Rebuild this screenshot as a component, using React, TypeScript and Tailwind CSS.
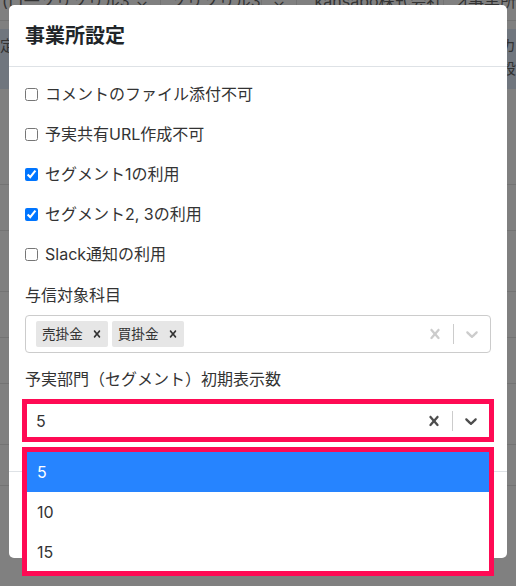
import React from "react";

const CrossIcon = ({ size = 20, className = "" }: { size?: number; className?: string }) => (
  <svg width={size} height={size} viewBox="0 0 20 20" className={className} fill="currentColor">
    <path d="M14.348 14.849c-0.469 0.469-1.229 0.469-1.697 0l-2.651-3.030-2.651 3.029c-0.469 0.469-1.229 0.469-1.697 0-0.469-0.469-0.469-1.229 0-1.697l2.758-3.15-2.759-3.152c-0.469-0.469-0.469-1.228 0-1.697s1.228-0.469 1.697 0l2.652 3.031 2.651-3.031c0.469-0.469 1.228-0.469 1.697 0s0.469 1.229 0 1.697l-2.758 3.152 2.758 3.15c0.469 0.469 0.469 1.229 0 1.698z" />
  </svg>
);

const ChevronIcon = ({ className = "" }: { className?: string }) => (
  <svg width={20} height={20} viewBox="0 0 20 20" className={className} fill="currentColor">
    <path d="M4.516 7.548c0.436-0.446 1.043-0.481 1.576 0l3.908 3.747 3.908-3.747c0.533-0.481 1.141-0.446 1.574 0 0.436 0.445 0.408 1.197 0 1.615-0.406 0.418-4.695 4.502-4.695 4.502-0.217 0.223-0.502 0.335-0.787 0.335s-0.57-0.112-0.789-0.335c0 0-4.287-4.084-4.695-4.502s-0.436-1.17 0-1.615z" />
  </svg>
);

const Check = ({ label, checked }: { label: string; checked?: boolean }) => (
  <label className="flex h-[40px] items-center gap-[7px]">
    <input type="checkbox" defaultChecked={checked} className="m-0 h-[13px] w-[13px] accent-[#0075ff]" />
    <span className="text-[16px] text-[#333]">{label}</span>
  </label>
);

const Tag = ({ label }: { label: string }) => (
  <div className="flex h-[26px] items-center rounded-[2px] bg-[#e6e6e6]">
    <span className="pl-[6px] pr-[3px] text-[13.6px] text-[#333]">{label}</span>
    <span className="flex w-[22px] items-center justify-center text-[#333]">
      <CrossIcon size={14} />
    </span>
  </div>
);

export default function App() {
  return (
    <div className="relative h-[586px] w-[516px] overflow-hidden bg-[#808080] font-[Inter,'Noto_Sans_CJK_JP',sans-serif]">
      {/* dimmed page behind */}
      <div className="flex flex-col text-[#333]">
        <div className="flex h-[21px] items-start overflow-hidden border-b border-[#737373] text-[16px]">
          <div className="-mt-[11px] flex w-[124px] pl-[2px] border-r border-[#737373] h-[32px] items-start whitespace-nowrap">(ロ一ソリソリル3</div>
          <div className="-mt-[11px] flex w-[41px] justify-center border-r border-[#737373] h-[32px]">⌄</div>
          <div className="-mt-[11px] w-[112px] pl-[10px] border-r border-[#737373] h-[32px] whitespace-nowrap">ソリソリル3</div>
          <div className="-mt-[11px] flex w-[38px] justify-center border-r border-[#737373] h-[32px]">⌄</div>
          <div className="-mt-[11px] w-[150px] pl-[18px] border-r border-[#737373] h-[32px] whitespace-nowrap">kansapo株式会社</div>
          <div className="-mt-[11px] pl-[12px] whitespace-nowrap">↗事業所</div>
        </div>
        <div className="mt-[8px] flex h-[60px] justify-between bg-[#70767e] text-[15px]">
          <div className="flex flex-col pt-[6px]"><span>定</span><span className="pl-[8px]">ツ</span></div>
          <div className="flex flex-col pt-[6px]"><span>カ</span><span>設</span></div>
        </div>
        <div className="mt-[95px] h-[1px] bg-[#737373]" />
        <div className="mt-[45px] h-[1px] bg-[#737373]" />
        <div className="mt-[60px] h-[1px] bg-[#737373]" />
        <div className="mt-[45px] h-[1px] bg-[#737373]" />
        <div className="mt-[45px] h-[1px] bg-[#737373]" />
        <div className="mt-[60px] h-[1px] bg-[#737373]" />
        <div className="mt-[40px] h-[1px] bg-[#737373]" />
      </div>

      {/* modal */}
      <div className="absolute left-[9px] top-[5px] flex h-[553px] w-[498px] flex-col rounded-[5px] bg-white">
        <div className="flex h-[62px] items-center border-b border-[#dee2e6] px-[16px]">
          <h1 className="text-[20px] font-bold text-[#212529]">事業所設定</h1>
        </div>
        <div className="flex flex-col px-[16px] pt-[7px]">
          <Check label="コメントのファイル添付不可" />
          <Check label="予実共有URL作成不可" />
          <Check label="セグメント1の利用" checked />
          <Check label="セグメント2, 3の利用" checked />
          <Check label="Slack通知の利用" />
          <div className="mt-[9px] text-[16px] leading-[24px] text-[#333]">与信対象科目</div>
          <div className="mt-[8px] flex h-[38px] items-center rounded-[4px] border border-[#cccccc]">
            <div className="flex flex-1 items-center gap-[4px] pl-[10px]">
              <Tag label="売掛金" />
              <Tag label="買掛金" />
            </div>
            <div className="flex w-[36px] justify-center text-[#cccccc]"><CrossIcon /></div>
            <div className="h-[20px] w-[1px] bg-[#cccccc]" />
            <div className="flex w-[36px] justify-center text-[#cccccc]"><ChevronIcon /></div>
          </div>
          <div className="mt-[14px] text-[16px] leading-[24px] text-[#333]">予実部門（セグメント）初期表示数</div>
          <div className="-mx-[3px] mt-[8px] flex h-[43px] items-center border-[5px] border-[#ff0a54] bg-white">
            <div className="flex-1 pl-[9px] text-[16px] text-[#333]">5</div>
            <div className="flex w-[36px] justify-center text-[#4d4d4d]"><CrossIcon /></div>
            <div className="h-[20px] w-[1px] bg-[#cccccc]" />
            <div className="flex w-[36px] justify-center text-[#4d4d4d]"><ChevronIcon /></div>
          </div>
        </div>
        <div className="mt-[29px] border-t border-[#dee2e6]" />
      </div>

      {/* open menu (annotated) */}
      <div className="absolute left-[22px] top-[447px] flex w-[472px] flex-col border-[5px] border-[#ff0a54] bg-white text-[16px]">
        <div className="flex h-[40px] items-center bg-[#2684ff] pl-[10px] text-white">5</div>
        <div className="flex h-[40px] items-center pl-[10px] text-[#333]">10</div>
        <div className="flex h-[39px] items-center pl-[10px] text-[#333]">15</div>
      </div>
    </div>
  );
}
